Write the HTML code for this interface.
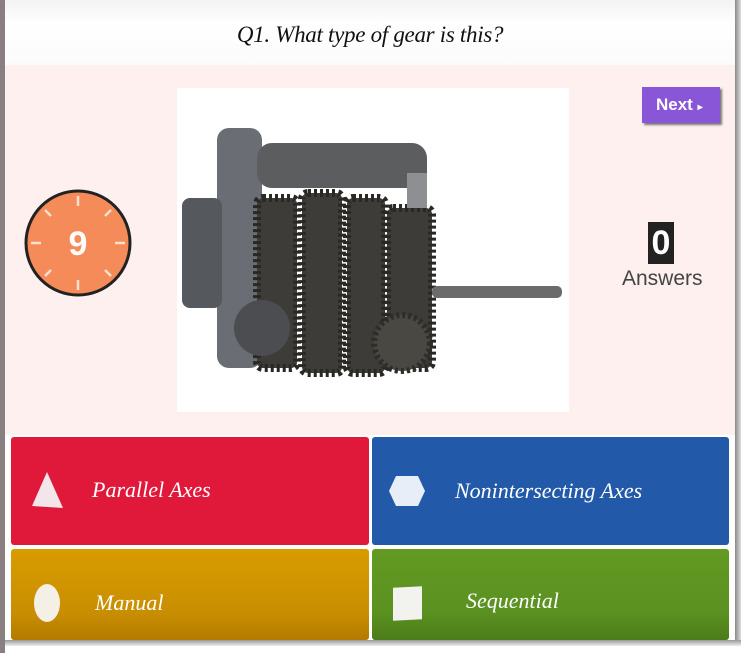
<!DOCTYPE html>
<html><head><meta charset="utf-8"><style>
body{margin:0;width:746px;height:653px;background:#fff;position:relative;overflow:hidden;font-family:"Liberation Sans",sans-serif}
.abs{position:absolute}
.serif{font-family:"Liberation Serif",serif;font-style:italic;color:#fff}
</style></head><body>
<div class="abs" style="left:0;top:0;width:5px;height:653px;background:#8a7f80"></div>
<div class="abs" style="left:5px;top:0;width:730px;height:65px;background:linear-gradient(#f3f3f4,#fff 40%,#fbfbfb)"></div>
<div class="abs serif" style="left:5px;top:22px;width:730px;text-align:center;font-size:23px;color:#111;letter-spacing:-0.3px">Q1. What type of gear is this?</div>
<div class="abs" style="left:5px;top:65px;width:730px;height:370px;background:#fdf0ee"></div>
<div class="abs" style="left:735px;top:0;width:6px;height:645px;background:linear-gradient(90deg,#888,#ddd)"></div>
<div class="abs" style="left:5px;top:640px;width:736px;height:6px;background:linear-gradient(#999,#eee)"></div>
<div class="abs" style="left:177px;top:88px;width:392px;height:324px;background:#fff"></div>
<svg class="abs" style="left:177px;top:88px" width="392" height="324">
<rect x="40" y="40" width="45" height="240" rx="12" fill="#6a6e74"/>
<rect x="5" y="110" width="40" height="110" rx="8" fill="#55595e"/>
<rect x="80" y="55" width="170" height="45" rx="15" fill="#5b5d5f"/>
<g fill="#3e3c38" stroke="#2a2824" stroke-width="8" stroke-dasharray="3 3">
<rect x="80" y="110" width="40" height="170" rx="6"/>
<rect x="125" y="105" width="40" height="180" rx="6"/>
<rect x="170" y="110" width="38" height="175" rx="6"/>
<rect x="210" y="120" width="45" height="160" rx="6"/>
</g>
<rect x="255" y="198" width="130" height="12" rx="5" fill="#6b6b6b"/>
<circle cx="85" cy="240" r="28" fill="#4b4d50"/>
<circle cx="225" cy="255" r="28" fill="#4a4843" stroke="#2f2d29" stroke-width="6" stroke-dasharray="3 3"/>
<rect x="230" y="85" width="20" height="35" fill="#8d8f92"/>
</svg>
<div class="abs" style="left:642px;top:87px;width:78px;height:36px;background:#8a56d8;box-shadow:2px 2px 2px #777"></div>
<div class="abs" style="left:656px;top:95px;color:#fff;font-weight:bold;font-size:17px">Next <span style="font-size:10px">&#9656;</span></div>
<svg class="abs" style="left:24px;top:188px" width="110" height="112">
<circle cx="54" cy="55" r="52" fill="#f58b58" stroke="#222" stroke-width="3"/>
<g stroke="#fbe0cf" stroke-width="2.5">
<line x1="54" y1="8" x2="54" y2="18"/><line x1="54" y1="92" x2="54" y2="102"/>
<line x1="7" y1="55" x2="17" y2="55"/><line x1="91" y1="55" x2="101" y2="55"/>
<line x1="21" y1="22" x2="27" y2="28"/><line x1="87" y1="22" x2="81" y2="28"/>
<line x1="21" y1="88" x2="27" y2="82"/><line x1="87" y1="88" x2="81" y2="82"/>
</g>
<text x="54" y="67" text-anchor="middle" font-family="Liberation Sans" font-weight="bold" font-size="34" fill="#fff">9</text>
</svg>
<div class="abs" style="left:648px;top:222px;width:26px;height:42px;background:#222;color:#fff;font-weight:bold;font-size:34px;text-align:center;line-height:42px">0</div>
<div class="abs" style="left:622px;top:267px;color:#444;font-size:21px">Answers</div>
<div class="abs" style="left:11px;top:437px;width:358px;height:108px;background:#e0193a;border-radius:3px"></div>
<div class="abs" style="left:372px;top:437px;width:357px;height:108px;background:#2259a9;border-radius:3px"></div>
<div class="abs" style="left:11px;top:549px;width:358px;height:91px;background:linear-gradient(#d89c00,#c98e00 70%,#b37a00);border-radius:3px"></div>
<div class="abs" style="left:372px;top:549px;width:357px;height:91px;background:linear-gradient(#629a22,#5b9121 70%,#4c7c1a);border-radius:3px"></div>
<svg class="abs" style="left:30px;top:470px" width="35" height="42"><polygon points="17,2 33,38 2,36" fill="#f3e6ea"/></svg>
<svg class="abs" style="left:388px;top:474px" width="38" height="34"><polygon points="8,2 30,2 37,17 30,32 8,32 1,17" fill="#e8eef8"/></svg>
<div class="abs" style="left:34px;top:584px;width:26px;height:38px;border-radius:50%;background:#f5f0e6"></div>
<div class="abs" style="left:393px;top:587px;width:29px;height:33px;background:#f2f2ee;transform:skewY(-3deg)"></div>
<div class="abs serif" style="left:92px;top:477px;font-size:22px">Parallel Axes</div>
<div class="abs serif" style="left:455px;top:478px;font-size:22px">Nonintersecting Axes</div>
<div class="abs serif" style="left:95px;top:590px;font-size:22px">Manual</div>
<div class="abs serif" style="left:466px;top:588px;font-size:22px">Sequential</div>
</body></html>
